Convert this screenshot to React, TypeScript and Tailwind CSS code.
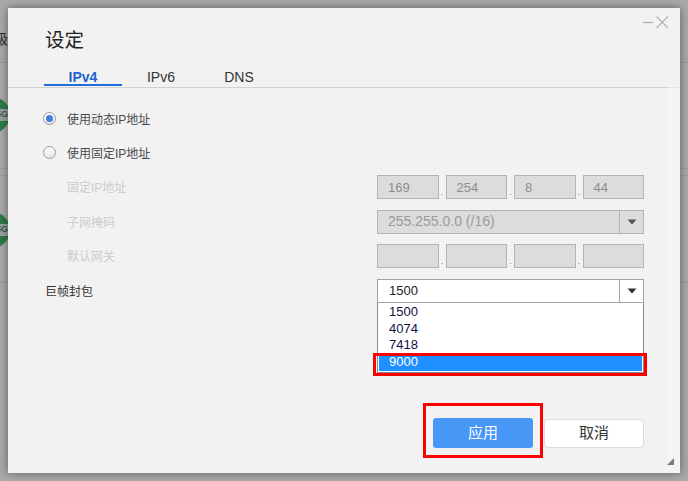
import React from "react";

function Radio({ checked }: { checked?: boolean }) {
  return (
    <span className="flex h-[13px] w-[13px] items-center justify-center rounded-full border border-[#9a9a9a] bg-gradient-to-b from-[#ffffff] to-[#e6e6e6]">
      {checked && <span className="h-[7px] w-[7px] rounded-full bg-[#3d7ee0]" />}
    </span>
  );
}

function IpBoxes({ values }: { values: string[] }) {
  return (
    <div className="flex w-[267px] h-[24px]">
      {values.map((v, i) => (
        <React.Fragment key={i}>
          {i > 0 && (
            <span className="w-[7px] flex items-end justify-center pb-[2px] text-[9px] leading-[9px] text-[#777]">.</span>
          )}
          <div className="flex-1 h-full border border-[#b3b3b3] bg-[#dcdcdc] pl-[10px] flex items-center text-[13px] text-[#8c8c8c]">
            {v}
          </div>
        </React.Fragment>
      ))}
    </div>
  );
}

function Arrow({ color }: { color: string }) {
  return (
    <svg width="10" height="6" viewBox="0 0 10 6">
      <path d="M0.5 0.5 L9.5 0.5 L5 5.5 Z" fill={color} />
    </svg>
  );
}

export default function App() {
  const font = "font-['Liberation_Sans','Noto_Sans_CJK_SC',sans-serif]";
  return (
    <div className={`relative w-[688px] h-[481px] overflow-hidden bg-[#a9a9a9] ${font}`}>
      {/* background page (dimmed) */}
      <div className="absolute inset-0">
        <div className="absolute left-0 right-0 top-[62px] h-px bg-[#9b9b9b]" />
        <div className="absolute left-0 right-0 top-[168px] h-px bg-[#9b9b9b]" />
        <div className="absolute left-0 right-0 top-[175px] h-px bg-[#a0a0a0]" />
        <div className="absolute left-0 right-0 top-[282px] h-px bg-[#9b9b9b]" />
        <div className="absolute left-[-20px] top-[29px] text-[14px] text-[#2e2e2e]">等级</div>
        <div className="absolute left-[-26px] top-[97px] w-[36px] h-[36px] rounded-full bg-[#2f7a48] flex items-center justify-end">
          <div className="w-full h-[12px] bg-[#9aa39c] flex items-center justify-end pr-[2px] text-[9px] font-bold text-[#3f5e49]">5G</div>
        </div>
        <div className="absolute left-[-26px] top-[212px] w-[36px] h-[36px] rounded-full bg-[#2f7a48] flex items-center justify-end">
          <div className="w-full h-[12px] bg-[#9aa39c] flex items-center justify-end pr-[2px] text-[9px] font-bold text-[#3f5e49]">5G</div>
        </div>
      </div>

      {/* dialog */}
      <div className="absolute left-[8px] top-[8px] w-[672px] h-[465px] bg-[#f2f2f2] shadow-[0_0_9px_rgba(0,0,0,0.45)] flex flex-col">
        {/* window controls */}
        <svg className="absolute top-[8px] right-[11px]" width="26" height="13" viewBox="0 0 26 13">
          <path d="M0 6.5 H10" stroke="#b4b4b4" strokeWidth="1.3" />
          <path d="M13.5 0.5 L25 12 M25 0.5 L13.5 12" stroke="#b4b4b4" strokeWidth="1.3" />
        </svg>

        {/* header */}
        <div className="h-[79px] flex flex-col">
          <div className="pt-[19px] pl-[37px] h-[44px] text-[19.5px] leading-[26px] text-[#222]">设定</div>
          <div className="mt-[18px] pl-[36px] flex">
            {[
              ["IPv4", true],
              ["IPv6", false],
              ["DNS", false],
            ].map(([t, active]) => (
              <div key={t as string} className="w-[78px] flex flex-col items-center">
                <div
                  className={`h-[14px] leading-[14px] text-[14px] ${
                    active ? "font-bold text-[#1e63d0]" : "text-[#333]"
                  }`}
                >
                  {t as string}
                </div>
                <div className={`h-[2px] w-full ${active ? "bg-[#1e6fd9]" : ""}`} />
              </div>
            ))}
          </div>
        </div>
        <div className="flex h-[1px]">
          <div className="flex-1 bg-[#d2d2d2]" />
          <div className="w-[13px] bg-[#e4e4e4]" />
        </div>

        {/* body */}
        <div className="flex-1 flex">
          <div className="flex-1 flex flex-col pt-[13px] pl-[35px] pr-[23px] pb-[25px]">
            <div className="h-[34.5px] flex items-center gap-[11px]">
              <Radio checked />
              <span className="pt-[3px] text-[12px] leading-[14px] text-[#4a4a4a]">使用动态IP地址</span>
            </div>
            <div className="h-[34.5px] flex items-center gap-[11px]">
              <Radio />
              <span className="pt-[3px] text-[12px] leading-[14px] text-[#4a4a4a]">使用固定IP地址</span>
            </div>
            <div className="h-[34.5px] flex items-center">
              <span className="w-[334px] pl-[24px] pt-[2px] text-[12px] leading-[14px] text-[#cdcdcd]">固定IP地址</span>
              <IpBoxes values={["169", "254", "8", "44"]} />
            </div>
            <div className="h-[34.5px] flex items-center">
              <span className="w-[334px] pl-[24px] pt-[2px] text-[12px] leading-[14px] text-[#cdcdcd]">子网掩码</span>
              <div className="w-[267px] h-[24px] border border-[#b3b3b3] bg-[#dcdcdc] flex">
                <div className="flex-1 pl-[10px] flex items-center text-[14px] text-[#9a9a9a]">255.255.0.0 (/16)</div>
                <div className="w-[24px] border-l border-[#b3b3b3] flex items-center justify-center">
                  <Arrow color="#555" />
                </div>
              </div>
            </div>
            <div className="h-[34.5px] flex items-center">
              <span className="w-[334px] pl-[24px] pt-[2px] text-[12px] leading-[14px] text-[#cdcdcd]">默认网关</span>
              <IpBoxes values={["", "", "", ""]} />
            </div>
            <div className="h-[34.5px] flex items-center">
              <span className="w-[334px] pl-[2px] pt-[2px] text-[12px] leading-[14px] text-[#333]">巨帧封包</span>
              <div className="relative w-[267px] h-[24px]">
                <div className="w-full h-full border border-[#a3a3a3] bg-white flex">
                  <div className="flex-1 pl-[11px] flex items-center text-[13px] text-[#222]">1500</div>
                  <div className="w-[24px] border-l border-[#a3a3a3] flex items-center justify-center">
                    <Arrow color="#333" />
                  </div>
                </div>
                <div className="absolute left-0 top-full w-full h-[70px] border border-t-0 border-[#8a8a8a] bg-white pt-[1px] pb-[2px] px-[1px] flex flex-col text-[13px] text-[#101040]">
                  {["1500", "4074", "7418", "9000"].map((v) => (
                    <div
                      key={v}
                      className={`h-[16.75px] leading-[16.75px] pl-[10px] ${
                        v === "9000" ? "bg-[#1e90ff] text-white" : ""
                      }`}
                    >
                      {v}
                    </div>
                  ))}
                </div>
              </div>
            </div>

            <div className="mt-auto flex justify-end gap-[11px]">
              <button className="w-[100px] h-[30px] rounded-[3px] bg-[#4697f6] text-white text-[15px]">应用</button>
              <button className="w-[100px] h-[29px] mt-[1px] rounded-[4px] bg-white border border-[#dcdcdc] text-[#333] text-[15px]">取消</button>
            </div>
          </div>
          <div className="w-[13px] bg-[#f4f4f4] flex flex-col justify-end items-start pb-[8px]">
            <svg width="7" height="7" viewBox="0 0 7 7">
              <path d="M7 0 L7 7 L0 7 Z" fill="#7a7a7a" />
            </svg>
          </div>
        </div>
      </div>

      {/* annotation boxes */}
      <div className="absolute left-[373px] top-[353px] w-[274px] h-[23px] border-[3px] border-[#ff0000]" />
      <div className="absolute left-[423px] top-[403px] w-[120px] h-[55px] border-[3px] border-[#ff0000]" />
    </div>
  );
}
